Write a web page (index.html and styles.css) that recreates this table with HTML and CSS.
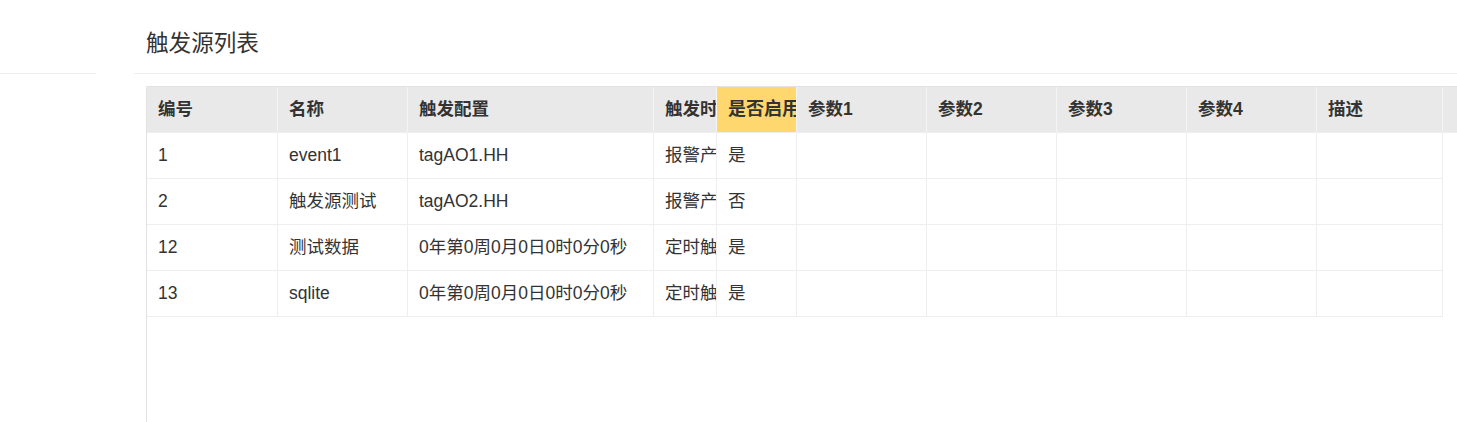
FILE: index.html
```html
<!DOCTYPE html>
<html lang="zh-CN">
<head>
    <meta charset="UTF-8">
    <title>触发源列表</title>
    <link rel="stylesheet" href="styles.css">
</head>
<body>
    <div class="side">
        <div class="side-head"></div>
    </div>

    <div class="main">
        <h2 class="page-title">触发源列表</h2>

        <div class="grid-box">
            <div class="grid-head">
                <div class="row">
                    <div class="cell">编号</div>
                    <div class="cell">名称</div>
                    <div class="cell">触发配置</div>
                    <div class="cell">触发时间</div>
                    <div class="cell active">是否启用</div>
                    <div class="cell">参数1</div>
                    <div class="cell">参数2</div>
                    <div class="cell">参数3</div>
                    <div class="cell">参数4</div>
                    <div class="cell">描述</div>
                </div>
            </div>

            <div class="grid-body">
                <div class="row">
                    <div class="cell">1</div>
                    <div class="cell">event1</div>
                    <div class="cell">tagAO1.HH</div>
                    <div class="cell">报警产生</div>
                    <div class="cell">是</div>
                    <div class="cell"></div>
                    <div class="cell"></div>
                    <div class="cell"></div>
                    <div class="cell"></div>
                    <div class="cell"></div>
                </div>
                <div class="row">
                    <div class="cell">2</div>
                    <div class="cell">触发源测试</div>
                    <div class="cell">tagAO2.HH</div>
                    <div class="cell">报警产生</div>
                    <div class="cell">否</div>
                    <div class="cell"></div>
                    <div class="cell"></div>
                    <div class="cell"></div>
                    <div class="cell"></div>
                    <div class="cell"></div>
                </div>
                <div class="row">
                    <div class="cell">12</div>
                    <div class="cell">测试数据</div>
                    <div class="cell">0年第0周0月0日0时0分0秒</div>
                    <div class="cell">定时触发</div>
                    <div class="cell">是</div>
                    <div class="cell"></div>
                    <div class="cell"></div>
                    <div class="cell"></div>
                    <div class="cell"></div>
                    <div class="cell"></div>
                </div>
                <div class="row">
                    <div class="cell">13</div>
                    <div class="cell">sqlite</div>
                    <div class="cell">0年第0周0月0日0时0分0秒</div>
                    <div class="cell">定时触发</div>
                    <div class="cell">是</div>
                    <div class="cell"></div>
                    <div class="cell"></div>
                    <div class="cell"></div>
                    <div class="cell"></div>
                    <div class="cell"></div>
                </div>
            </div>
        </div>
    </div>
</body>
</html>
```

FILE: styles.css
```css
* {
    margin: 0;
    padding: 0;
    box-sizing: border-box;
    font-family: "Liberation Sans", "Noto Sans CJK SC", sans-serif;
}

body {
    display: flex;
    height: 100vh;
    overflow: hidden;
    background: #fff;
    color: #333;
}

/* Sidebar */
.side {
    width: 96px;
    flex-shrink: 0;
}

.side-head {
    height: 74px;
    border-bottom: 1px solid #eee;
}

/* Main */
.main {
    flex: 1;
    margin-left: 38px;
    display: flex;
    flex-direction: column;
    min-width: 0;
}

.page-title {
    height: 74px;
    padding: 28px 0 0 12px;
    font-size: 22.6px;
    line-height: 32px;
    font-weight: normal;
    color: #333;
    border-bottom: 1px solid #eee;
}

/* Grid */
.grid-box {
    flex: 1;
    margin: 12px 0 0 12px;
    border-top: 1px solid #e2e2e2;
    border-left: 1px solid #e2e2e2;
    border-top-left-radius: 2px;
    overflow: hidden;
}

.row {
    display: grid;
    grid-template-columns: 131px 130px 246px 63px 80px 130px 130px 130px 130px 126px;
}

.cell {
    padding-left: 11px;
    white-space: nowrap;
    overflow: hidden;
    font-size: 17.5px;
    border-right: 1px solid #eee;
}

.grid-head {
    background: #e9e9e9;
    border-bottom: 1px solid #eee;
}

.grid-head .cell {
    height: 45px;
    line-height: 45px;
    font-weight: bold;
    color: #333;
    border-right-color: #f4f4f4;
}

.grid-head .cell.active {
    background: #fed86f;
    font-size: 18px;
}

.grid-body .cell {
    height: 46px;
    line-height: 45px;
    border-bottom: 1px solid #eee;
}
```
